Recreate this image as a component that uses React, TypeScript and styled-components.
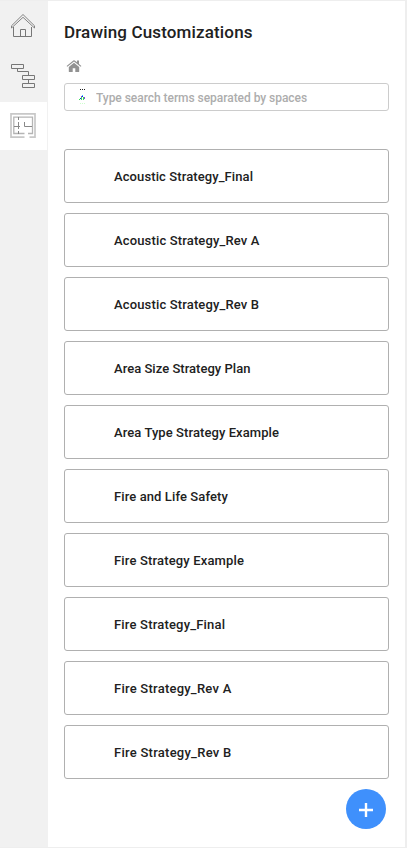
import React from "react";
import styled, { createGlobalStyle } from "styled-components";

const GlobalStyle = createGlobalStyle`
  * { box-sizing: border-box; }
  body { margin: 0; background: #eee; font-family: Roboto, "Liberation Sans", sans-serif; }
`;

const Page = styled.div`
  display: flex;
  width: 407px;
  height: 848px;
  padding: 1px 2px 1px 0;
  overflow: hidden;
`;

const Sidebar = styled.nav`
  flex: 0 0 48px;
  padding-top: 1px;
  background: #f1f1f1;
`;

const NavButton = styled.button<{ $active?: boolean }>`
  display: block;
  width: 47px;
  height: ${(p) => (p.$active ? 48 : 50)}px;
  padding: 0;
  border: 0;
  background: ${(p) => (p.$active ? "#fff" : "transparent")};
`;

const NavIcon = styled.svg`
  display: block;
  fill: none;
  stroke: #777;
`;

const Panel = styled.main`
  flex: 1;
  display: flex;
  flex-direction: column;
  padding: 21px 16px 0;
  background: #fff;
`;

const Title = styled.h1`
  margin: 0;
  height: 20px;
  font-size: 17px;
  line-height: 20px;
  font-weight: 500;
  letter-spacing: 0.15px;
  color: #212121;
`;

const Breadcrumb = styled.div`
  height: 20px;
  margin: 15px 0 6px 2px;
`;

const HomeGlyph = styled.svg`
  display: block;
  fill: #929292;
`;

const SearchBox = styled.label`
  display: flex;
  align-items: center;
  height: 28px;
  padding-left: 13px;
  border: 1px solid #ccc;
  border-radius: 3px;
`;

const SearchInput = styled.input`
  flex: 1;
  min-width: 0;
  margin-left: 8px;
  padding: 1px 0 0;
  border: 0;
  outline: 0;
  background: transparent;
  font: 500 12px Roboto, sans-serif;
  letter-spacing: -0.04px;
  &::placeholder { color: #adadad; opacity: 1; }
`;

const List = styled.ul`
  display: flex;
  flex-direction: column;
  gap: 10px;
  margin: 38px 0 0;
  padding: 0;
  list-style: none;
`;

const Card = styled.li<{ $tracking: number }>`
  display: flex;
  align-items: center;
  height: 54px;
  padding-left: 49px;
  border: 1px solid #b0b0b0;
  border-radius: 3px;
  font-size: 13px;
  font-weight: 500;
  letter-spacing: ${(p) => p.$tracking}px;
  color: #212121;
`;

const AddButton = styled.button`
  display: flex;
  align-items: center;
  justify-content: center;
  align-self: flex-end;
  width: 40px;
  height: 40px;
  margin: 10px 3px 0 0;
  padding: 2px 0 0;
  border: 0;
  border-radius: 50%;
  background: #3f90fc;
`;

const drawings = [
  { name: "Acoustic Strategy_Final", tracking: 0.1 },
  { name: "Acoustic Strategy_Rev A", tracking: 0.15 },
  { name: "Acoustic Strategy_Rev B", tracking: 0.15 },
  { name: "Area Size Strategy Plan", tracking: 0.03 },
  { name: "Area Type Strategy Example", tracking: 0.08 },
  { name: "Fire and Life Safety", tracking: 0.1 },
  { name: "Fire Strategy Example", tracking: 0.16 },
  { name: "Fire Strategy_Final", tracking: 0.19 },
  { name: "Fire Strategy_Rev A", tracking: 0.24 },
  { name: "Fire Strategy_Rev B", tracking: 0.26 },
];

export default function App() {
  return (
    <>
      <GlobalStyle />
      <Page>
        <Sidebar>
          <NavButton aria-label="Home">
            <NavIcon width="47" height="50" viewBox="0 2 47 50">
              <path d="M13.5 27V36.5H31.5V27M20.5 36V29.5H25.5V36" />
              <path d="M11.5 28V25.8L23 14.5L34.5 25.8V28L23 17.3Z" strokeWidth="0.9" />
            </NavIcon>
          </NavButton>
          <NavButton aria-label="Schedule">
            <NavIcon width="47" height="50" viewBox="0 52 47 50">
              <path d="M11.5 64.5H23.5V68.5H11.5ZM22.5 75.5H34.5V79.5H22.5ZM22.5 83.5H34.5V87.5H22.5ZM17.5 69V71.5H28.5V75M28.5 80V83" />
            </NavIcon>
          </NavButton>
          <NavButton $active aria-label="Drawings">
            <NavIcon width="47" height="48" viewBox="0 102 47 48">
              <path d="M24.5 137.2H11V113.8H35V137.2H29.5" stroke="#c8c8c8" strokeWidth="1.7" />
              <path d="M24.5 133.5H13.8V117.2H32.5V133.5H28" stroke="#b5b5b5" strokeWidth="1.3" />
              <path d="M18.5 117V120M18.5 122V129M18.5 131V134M14 126.5H20M24.5 122V126.5H32" stroke="#888" />
            </NavIcon>
          </NavButton>
        </Sidebar>
        <Panel>
          <Title>Drawing Customizations</Title>
          <Breadcrumb>
            <HomeGlyph width="16" height="20" viewBox="0 0.5 16 20">
              <path d="M8 6.2L13.2 10.5V15Q13.2 15.6 12.6 15.6H9.3V11.8H6.7V15.6H3.4Q2.8 15.6 2.8 15V10.5Z" />
              <path d="M.6 9.5L7.3 3.9Q8 3.4 8.7 3.9L11 5.8V4H13V7.5L15.4 9.5L14.7 10.3L8 4.9L1.3 10.3Z" />
            </HomeGlyph>
          </Breadcrumb>
          <SearchBox>
            <svg width="10" height="20" viewBox="0 1 10 20" shapeRendering="crispEdges" aria-hidden="true">
              <path d="M2 3h1v1H2zM4 3h1v1H4zM6 3h1v1H6z" fill="#222" />
              <path d="M4 9h1v1H4z" fill="#3cf" />
              <path d="M4 10h1v1H4zM2 12h1v1H2z" fill="#22e" />
              <path d="M3 10h1v1H3zM6 11h1v2H6z" fill="#84d" />
              <path d="M1 13h1v1H1zM3 11h1v3H3zM5 11h1v3H5z" fill="#3d5" />
              <path d="M2 17h1v1H2zM4 17h1v1H4zM6 17h1v1H6z" fill="#cfc" />
            </svg>
            <SearchInput placeholder="Type search terms separated by spaces" />
          </SearchBox>
          <List>
            {drawings.map(({ name, tracking }) => (
              <Card key={name} $tracking={tracking}>
                {name}
              </Card>
            ))}
          </List>
          <AddButton aria-label="Add drawing">
            <svg width="14" height="14" viewBox="0 0 14 14" stroke="#fff" strokeWidth="2.4">
              <path d="M7 0V14M0 7H14" />
            </svg>
          </AddButton>
        </Panel>
      </Page>
    </>
  );
}
